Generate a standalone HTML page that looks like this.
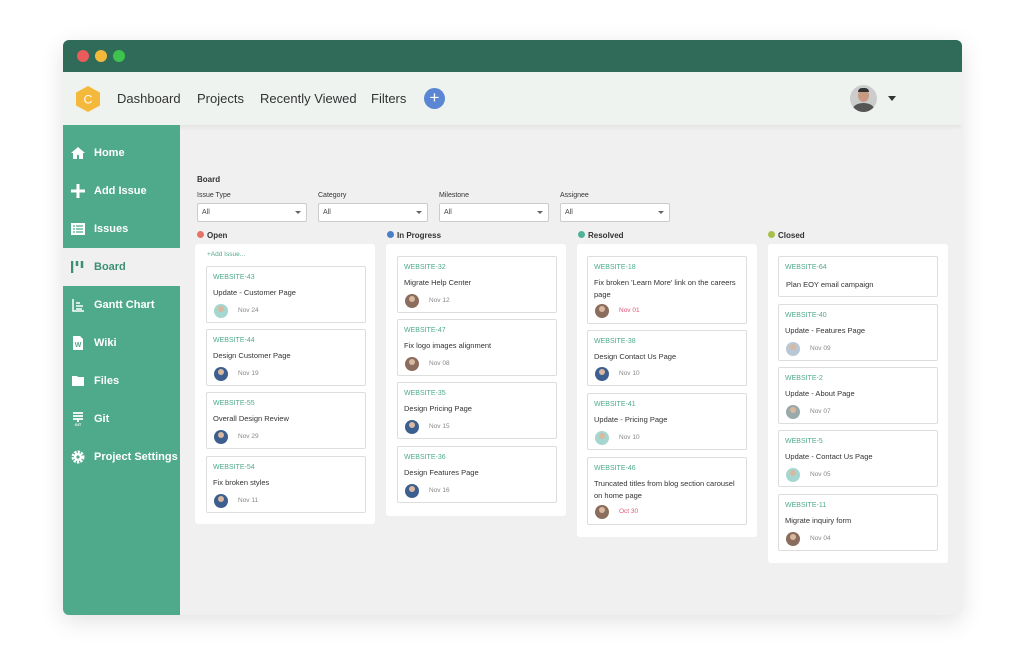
<!DOCTYPE html>
<html><head><meta charset="utf-8"><style>
*{margin:0;padding:0;box-sizing:border-box}
body{width:1024px;height:655px;background:#fff;font-family:"Liberation Sans",sans-serif;position:relative;overflow:hidden}
.win{position:absolute;left:63px;top:40px;width:899px;height:575px;border-radius:6px;overflow:hidden;box-shadow:0 6px 24px rgba(0,0,0,.12);background:#f0f0f0}
.title{position:absolute;left:0;top:0;width:100%;height:32px;background:#2f6b58}
.dot{position:absolute;top:10px;width:12px;height:12px;border-radius:50%}
.hdr{position:absolute;left:0;top:32px;width:100%;height:53px;background:#eef3f0;box-shadow:0 2px 4px rgba(0,0,0,.06)}
.nav{position:absolute;top:19px;font-size:13px;color:#333}
.side{position:absolute;left:0;top:85px;width:117px;height:490px;background:#4faa8c}
.si{position:absolute;left:0;width:117px;height:38px;color:#fff;font-size:11px;font-weight:bold;line-height:38px;padding-left:31px}
.si .ic{position:absolute;left:8px;top:12px;width:14px;height:14px}
.act{background:#f0f0f0;color:#3d8f74}
.lbl{position:absolute;font-size:7px;color:#333}
.sel{position:absolute;top:203px;width:110px;height:19px;background:#fff;border:1px solid #ccc;border-radius:2px;font-size:7px;color:#444;padding:5px 4px}
.sel:after{content:"";position:absolute;right:5px;top:7px;border-left:3px solid transparent;border-right:3px solid transparent;border-top:3px solid #666}
.ch{position:absolute;top:231px;font-size:8px;font-weight:bold;color:#333;padding-left:10px}
.ch i{position:absolute;left:0;top:0;width:7px;height:7px;border-radius:50%}
.col{position:absolute;top:244px;width:180px;background:#fff;border-radius:3px}
.card{position:absolute;width:160px;background:#fff;border:1px solid #ddd;border-radius:2px;font-size:7.5px;color:#333}
.card .id{position:absolute;left:6px;top:7px;color:#4faa8c;font-size:7px}
.card .t{position:absolute;left:6px;top:20px;line-height:12px;width:145px}
.card .a{position:absolute;left:7px;width:14px;height:14px;border-radius:50%;background:#8a6d5c;overflow:hidden}
.card .a:after{content:"";position:absolute;left:4px;top:2px;width:6px;height:6px;border-radius:50%;background:#d9b8a0}
.card .d{position:absolute;left:31px;font-size:6.5px;color:#888}
</style></head><body>
<div class="win">
<div class="title">
<div class="dot" style="left:14px;background:#ec5b5b"></div>
<div class="dot" style="left:32px;background:#f4b93b"></div>
<div class="dot" style="left:50px;background:#3ec44e"></div>
</div>
<div class="hdr">
<svg style="position:absolute;left:12px;top:13px" width="26" height="28" viewBox="0 0 26 28"><polygon points="13,1 25,7.5 25,20.5 13,27 1,20.5 1,7.5" fill="#f4b93b"/><text x="13" y="18.5" font-size="12" fill="#fff" text-anchor="middle" font-family="Liberation Sans">C</text></svg>
<div class="nav" style="left:54px">Dashboard</div>
<div class="nav" style="left:134px">Projects</div>
<div class="nav" style="left:197px">Recently Viewed</div>
<div class="nav" style="left:308px">Filters</div>
<div style="position:absolute;left:361px;top:16px;width:21px;height:21px;border-radius:50%;background:#5b86d4;color:#fff;font-size:17px;line-height:20px;text-align:center">+</div>
<div style="position:absolute;left:787px;top:13px;width:27px;height:27px;border-radius:50%;background:#ccc;overflow:hidden"><div style="position:absolute;left:8px;top:4px;width:11px;height:13px;border-radius:50%;background:#c99a82"></div><div style="position:absolute;left:3px;top:18px;width:21px;height:12px;border-radius:50%;background:#555"></div><div style="position:absolute;left:8px;top:3px;width:11px;height:4px;background:#333;border-radius:4px 4px 0 0"></div></div>
<div style="position:absolute;left:825px;top:24px;border-left:4px solid transparent;border-right:4px solid transparent;border-top:5px solid #333"></div>
</div>
<div class="side">
<div class="si" style="top:9px">Home<svg class="ic" viewBox="0 0 14 14"><path d="M7 1L0 7h2v6h4V9h2v4h4V7h2z" fill="#fff"/></svg></div>
<div class="si" style="top:47px">Add Issue<svg class="ic" viewBox="0 0 14 14"><path d="M5.5 0h3v5.5H14v3H8.5V14h-3V8.5H0v-3h5.5z" fill="#fff"/></svg></div>
<div class="si" style="top:85px">Issues<svg class="ic" viewBox="0 0 14 14"><rect x="0" y="1" width="14" height="12" fill="#fff"/><path d="M2 4h2M2 7h2M2 10h2M5 4h7M5 7h7M5 10h7" stroke="#4faa8c" stroke-width="1.2"/></svg></div>
<div class="si act" style="top:123px">Board<svg class="ic" viewBox="0 0 14 14"><path d="M1 1v12M6 1v5M11 1v7" stroke="#3d8f74" stroke-width="2.5"/></svg></div>
<div class="si" style="top:161px">Gantt Chart<svg class="ic" viewBox="0 0 14 14"><path d="M2 1v12h11M5 5h4M5 8h7M5 11h6" stroke="#fff" stroke-width="1.5" fill="none"/></svg></div>
<div class="si" style="top:199px">Wiki<svg class="ic" viewBox="0 0 14 14"><path d="M2 0h7l3 3v11H2z" fill="#fff"/><text x="7" y="11" font-size="7" font-weight="bold" fill="#4faa8c" text-anchor="middle">W</text></svg></div>
<div class="si" style="top:237px">Files<svg class="ic" viewBox="0 0 14 14"><path d="M1 2h5l1 1h6v9H1z" fill="#fff"/></svg></div>
<div class="si" style="top:275px">Git<svg class="ic" viewBox="0 0 14 14"><path d="M2 1h10M2 4h10M2 7h10M7 7v3" stroke="#fff" stroke-width="1.8"/><text x="7" y="14" font-size="4" fill="#fff" text-anchor="middle">GIT</text></svg></div>
<div class="si" style="top:313px">Project Settings<svg class="ic" viewBox="0 0 14 14"><circle cx="7" cy="7" r="5" fill="none" stroke="#fff" stroke-width="3" stroke-dasharray="2.2 1.1"/><circle cx="7" cy="7" r="4" fill="#fff"/><circle cx="7" cy="7" r="1.6" fill="#4faa8c"/></svg></div>
</div>
</div>
<div style="position:absolute;left:197px;top:175px;font-size:8px;font-weight:bold;color:#333">Board</div>
<div class="lbl" style="left:197px;top:192px">Issue Type</div>
<div class="lbl" style="left:318px;top:192px">Category</div>
<div class="lbl" style="left:439px;top:192px">Milestone</div>
<div class="lbl" style="left:560px;top:192px">Assignee</div>
<div class="sel" style="left:197px">All</div>
<div class="sel" style="left:318px">All</div>
<div class="sel" style="left:439px">All</div>
<div class="sel" style="left:560px">All</div>
<div class="ch" style="left:197px"><i style="background:#e57368"></i>Open</div>
<div class="ch" style="left:387px"><i style="background:#4a7fc8"></i>In Progress</div>
<div class="ch" style="left:578px"><i style="background:#4fb39a"></i>Resolved</div>
<div class="ch" style="left:768px"><i style="background:#a8c04a"></i>Closed</div>
<div class="col" style="left:195px;height:280px"></div>
<div class="col" style="left:386px;height:272px"></div>
<div class="col" style="left:577px;height:293px"></div>
<div class="col" style="left:768px;height:319px"></div>
<div style="position:absolute;left:207px;top:251px;font-size:6.5px;color:#4faa8c">+Add Issue...</div>
<div class="card" style="left:206px;top:266px;height:57px"><div class="id">WEBSITE-43</div><div class="t">Update - Customer Page</div><div class="a" style="top:37px;background:#a5d6cf"></div><div class="d" style="top:40px">Nov 24</div></div>
<div class="card" style="left:206px;top:329px;height:57px"><div class="id">WEBSITE-44</div><div class="t">Design Customer Page</div><div class="a" style="top:37px;background:#3d5f8f"></div><div class="d" style="top:40px">Nov 19</div></div>
<div class="card" style="left:206px;top:392px;height:57px"><div class="id">WEBSITE-55</div><div class="t">Overall Design Review</div><div class="a" style="top:37px;background:#3d5f8f"></div><div class="d" style="top:40px">Nov 29</div></div>
<div class="card" style="left:206px;top:456px;height:57px"><div class="id">WEBSITE-54</div><div class="t">Fix broken styles</div><div class="a" style="top:37px;background:#3d5f8f"></div><div class="d" style="top:40px">Nov 11</div></div>
<div class="card" style="left:397px;top:256px;height:57px"><div class="id">WEBSITE-32</div><div class="t">Migrate Help Center</div><div class="a" style="top:37px"></div><div class="d" style="top:40px">Nov 12</div></div>
<div class="card" style="left:397px;top:319px;height:57px"><div class="id">WEBSITE-47</div><div class="t">Fix logo images alignment</div><div class="a" style="top:37px"></div><div class="d" style="top:40px">Nov 08</div></div>
<div class="card" style="left:397px;top:382px;height:57px"><div class="id">WEBSITE-35</div><div class="t">Design Pricing Page</div><div class="a" style="top:37px;background:#3d5f8f"></div><div class="d" style="top:40px">Nov 15</div></div>
<div class="card" style="left:397px;top:446px;height:57px"><div class="id">WEBSITE-36</div><div class="t">Design Features Page</div><div class="a" style="top:37px;background:#3d5f8f"></div><div class="d" style="top:40px">Nov 16</div></div>
<div class="card" style="left:587px;top:256px;height:68px"><div class="id">WEBSITE-18</div><div class="t">Fix broken 'Learn More' link on the careers page</div><div class="a" style="top:47px"></div><div class="d" style="top:50px;color:#e0567a">Nov 01</div></div>
<div class="card" style="left:587px;top:330px;height:56px"><div class="id">WEBSITE-38</div><div class="t">Design Contact Us Page</div><div class="a" style="top:36px;background:#3d5f8f"></div><div class="d" style="top:39px">Nov 10</div></div>
<div class="card" style="left:587px;top:393px;height:57px"><div class="id">WEBSITE-41</div><div class="t">Update - Pricing Page</div><div class="a" style="top:37px;background:#a5d6cf"></div><div class="d" style="top:40px">Nov 10</div></div>
<div class="card" style="left:587px;top:457px;height:68px"><div class="id">WEBSITE-46</div><div class="t">Truncated titles from blog section carousel on home page</div><div class="a" style="top:47px"></div><div class="d" style="top:50px;color:#e0567a">Oct 30</div></div>
<div class="card" style="left:778px;top:256px;height:41px"><div class="id">WEBSITE-64</div><div class="t" style="left:7px;top:22px">Plan EOY email campaign</div></div>
<div class="card" style="left:778px;top:304px;height:57px"><div class="id">WEBSITE-40</div><div class="t">Update - Features Page</div><div class="a" style="top:37px;background:#b9c7d6"></div><div class="d" style="top:40px">Nov 09</div></div>
<div class="card" style="left:778px;top:367px;height:57px"><div class="id">WEBSITE-2</div><div class="t">Update - About Page</div><div class="a" style="top:37px;background:#9aa"></div><div class="d" style="top:40px">Nov 07</div></div>
<div class="card" style="left:778px;top:430px;height:57px"><div class="id">WEBSITE-5</div><div class="t">Update - Contact Us Page</div><div class="a" style="top:37px;background:#a5d6cf"></div><div class="d" style="top:40px">Nov 05</div></div>
<div class="card" style="left:778px;top:494px;height:57px"><div class="id">WEBSITE-11</div><div class="t">Migrate inquiry form</div><div class="a" style="top:37px"></div><div class="d" style="top:40px">Nov 04</div></div>
</body></html>
